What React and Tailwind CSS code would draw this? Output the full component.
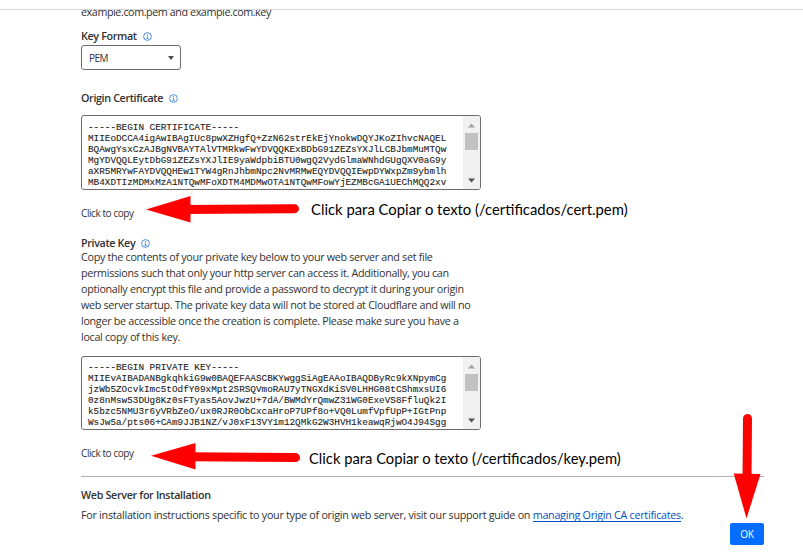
const CERTIFICATE = [
  '-----BEGIN CERTIFICATE-----',
  'MIIEoDCCA4igAwIBAgIUc8pwXZHgfQ+ZzN62strEkEjYnokwDQYJKoZIhvcNAQEL',
  'BQAwgYsxCzAJBgNVBAYTAlVTMRkwFwYDVQQKExBDbG91ZEZsYXJlLCBJbmMuMTQw',
  'MgYDVQQLEytDbG91ZEZsYXJlIE9yaWdpbiBTU0wgQ2VydGlmaWNhdGUgQXV0aG9y',
  'aXR5MRYwFAYDVQQHEw1TYW4gRnJhbmNpc2NvMRMwEQYDVQQIEwpDYWxpZm9ybmlh',
  'MB4XDTIzMDMxMzA1NTQwMFoXDTM4MDMwOTA1NTQwMFowYjEZMBcGA1UEChMQQ2xv',
];

const PRIVATE_KEY = [
  '-----BEGIN PRIVATE KEY-----',
  'MIIEvAIBADANBgkqhkiG9w0BAQEFAASCBKYwggSiAgEAAoIBAQDByRc9kXNpymCg',
  'jzWb5ZOcvkImc5tOdfY09xMpt2SRSQVmoRAU7yTNGXdKiSV0LHHG08tCShmxsUI6',
  '0z8nMsw53DUg8Kz0sFTyas5AovJwzU+7dA/BWMdYrQmwZ31WG0ExeVS8FfluQk2I',
  'k5bzc5NMU3r6yVRbZeO/ux0RJR0ObCxcaHroP7UPf8o+VQ0LumfVpfUpP+IGtPnp',
  'WsJw5a/pts06+CAm9JJB1NZ/vJ0xF13VY1m12QMkG2W3HVH1keawqRjwO4J94Sgg',
];

function InfoIcon() {
  return (
    <svg className="h-[9px] w-[9px] shrink-0" viewBox="0 0 9 9" fill="none" stroke="#3b7fdc">
      <circle cx="4.5" cy="4.5" r="3.9" strokeWidth="0.9" />
      <path d="M3.6 4H4.6V6.5M3.4 6.5H5.7" strokeWidth="0.8" />
      <path d="M4.1 2.5H5" strokeWidth="0.9" />
    </svg>
  );
}

function Label({ children }) {
  return (
    <div className="flex h-4 items-center gap-[6px]">
      <span className="text-[10.75px] font-semibold leading-4 tracking-[-0.36px]">{children}</span>
      <InfoIcon />
    </div>
  );
}

function PemBox({ lines, height, inset }) {
  return (
    <div className={`flex w-[400px] overflow-hidden rounded-[3px] border border-[#6b6b6b] bg-white ${height}`}>
      <div className={`flex-1 overflow-hidden pl-[6px] font-['Liberation_Mono',monospace] text-[9.33px] leading-[11px] text-[#1c1c1c] [-webkit-text-stroke:0.1px_#1c1c1c] ${inset}`}>
        {lines.map((line) => (
          <div key={line} className="whitespace-pre">{line}</div>
        ))}
      </div>
      <div className="flex w-[17px] flex-col items-center bg-[#f1f1f1]">
        <svg className="h-[17px] w-[17px] shrink-0" viewBox="0 0 17 17">
          <path d="M5 11.5L8.5 7.5L12 11.5Z" fill="#a3a3a3" />
        </svg>
        <div className="h-[17px] w-[13px] bg-[#c1c1c1]" />
        <svg className="mt-auto h-[17px] w-[17px] shrink-0" viewBox="0 0 17 17">
          <path d="M5 6.5L8.5 10.5L12 6.5Z" fill="#505050" />
        </svg>
      </div>
    </div>
  );
}

export default function App() {
  return (
    <div className="relative flex h-[559px] w-[803px] flex-col overflow-hidden bg-white pt-[9px] font-['Open_Sans','Noto_Sans',sans-serif] text-[10.75px] text-[#313131]">
      <main className="flex flex-1 flex-col overflow-hidden whitespace-nowrap border-t border-[#d5d7d8] pl-[81px]">
        <p className="-mt-[6px] h-4 leading-4 tracking-[-0.42px]">example.com.pem and example.com.key</p>
        <div className="mt-2">
          <Label>Key Format</Label>
        </div>
        <div className="mt-[1px] flex h-[25px] w-[100px] items-center justify-between rounded-[3px] border border-[#6b6b6b] pl-[7px] pr-[6px] pt-[1px] text-[10px]">
          <span className="tracking-[-0.5px]">PEM</span>
          <svg className="h-1 w-[6px]" viewBox="0 0 6 4"><path d="M0 0H6L3 4Z" fill="#4a4a4a" /></svg>
        </div>
        <div className="mt-5">
          <Label>Origin Certificate</Label>
        </div>
        <div className="mt-[9px]">
          <PemBox lines={CERTIFICATE} height="h-[75px]" inset="pt-[6px]" />
        </div>
        <p className="mt-[15px] h-4 text-[10px] leading-4 tracking-[-0.42px]">Click to copy</p>
        <div className="mt-[14px]">
          <Label>Private Key</Label>
        </div>
        <div className="-mt-[2px] leading-4 tracking-[-0.3px]">
          <p>Copy the contents of your private key below to your web server and set file</p>
          <p>permissions such that only your http server can access it. Additionally, you can</p>
          <p>optionally encrypt this file and provide a password to decrypt it during your origin</p>
          <p>web server startup. The private key data will not be stored at Cloudflare and will no</p>
          <p>longer be accessible once the creation is complete. Please make sure you have a</p>
          <p>local copy of this key.</p>
        </div>
        <div className="mt-[11px]">
          <PemBox lines={PRIVATE_KEY} height="h-[74px]" inset="pt-[5px]" />
        </div>
        <p className="mt-[15px] h-4 text-[10px] leading-4 tracking-[-0.42px]">Click to copy</p>
        <section className="mt-[15px] w-[683px] border-t border-[#b0b3b0] tracking-[-0.27px]">
          <h2 className="mt-[10px] h-4 font-semibold leading-4 tracking-[-0.33px]">Web Server for Installation</h2>
          <p className="mt-1 h-4 leading-4">
            For installation instructions specific to your type of origin web server, visit our support guide on{' '}
            <a className="inline-block h-[15px] border-b border-[#0051c3] leading-4 text-[#0051c3]">managing Origin CA certificates</a>.
          </p>
          <button className="ml-auto block h-[22px] w-[34px] rounded-[2px] bg-[#056dff] text-[10px] leading-[22px] text-white">OK</button>
        </section>
      </main>

      <span className="absolute left-[311px] top-[199px] whitespace-nowrap font-['Lato',sans-serif] text-[14.85px] leading-5 text-black">Click para Copiar o texto (/certificados/cert.pem)</span>
      <span className="absolute left-[309px] top-[448px] whitespace-nowrap font-['Lato',sans-serif] text-[14.75px] leading-5 text-black">Click para Copiar o texto (/certificados/key.pem)</span>

      <svg className="pointer-events-none absolute inset-0 h-[559px] w-[803px]" viewBox="0 0 803 559" fill="#ff0000" stroke="#ff0000">
        <path d="M294.5 208.7L185 209.5" strokeWidth="9" strokeLinecap="round" />
        <path d="M146 209.5L190.5 196V222.5Z" stroke="none" />
        <path d="M295.5 457.6L190 456.7" strokeWidth="9" strokeLinecap="round" />
        <path d="M151 455.7L195.5 443V469.5Z" stroke="none" />
        <path d="M747.5 418.5L747 480" strokeWidth="9" strokeLinecap="round" />
        <path d="M746.5 518.5L733.7 473.5L760.5 474Z" stroke="none" />
      </svg>
    </div>
  );
}
